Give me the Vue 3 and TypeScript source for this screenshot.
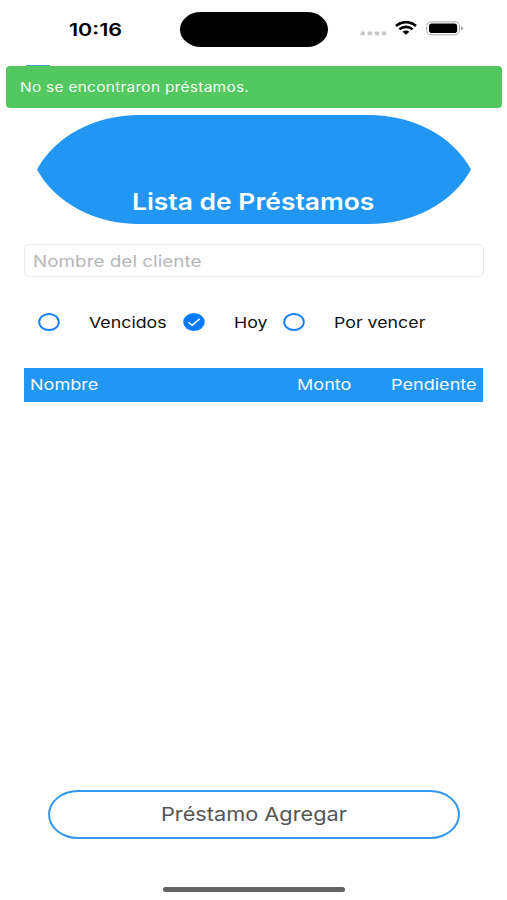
<script setup lang="ts">
import { ref } from 'vue'

interface Filter {
  id: string
  label: string
}

const filters: Filter[] = [
  { id: 'vencidos', label: 'Vencidos' },
  { id: 'hoy', label: 'Hoy' },
  { id: 'por-vencer', label: 'Por vencer' },
]
const selected = ref('hoy')
const cliente = ref('')
</script>

<template>
  <main class="screen">
    <header class="status">
      <div class="clock"><span class="wide">10:16</span></div>
      <div class="island"></div>
      <div class="indicators">
        <svg class="dots" width="27" height="5" viewBox="0 0 27 5" fill="#c8c8c8">
          <rect x="0.5" y="0.5" width="4.4" height="3.8" rx="1.3" />
          <rect x="7.6" y="0.5" width="4.4" height="3.8" rx="1.3" />
          <rect x="14.7" y="0.5" width="4.4" height="3.8" rx="1.3" />
          <rect x="21.8" y="0.5" width="4.4" height="3.8" rx="1.3" />
        </svg>
        <svg class="wifi" width="22" height="14" viewBox="0 0 22 14" fill="none" stroke="#000">
          <path d="M1 5.1C6.6 -0.1 15.4 -0.1 21 5.1" stroke-width="2.7" />
          <path d="M4.4 8.4C8.2 5 13.8 5 17.6 8.4" stroke-width="2.6" />
          <path d="M7.6 10.8Q11 8.1 14.4 10.8L11 13.8Z" fill="#000" stroke="none" />
        </svg>
        <svg class="battery" width="38" height="15" viewBox="0 0 38 15">
          <rect x="0.7" y="0.8" width="32.8" height="13" rx="4.4" fill="#fff" stroke="#aaa" />
          <rect x="3" y="2.6" width="28.2" height="9.4" rx="2.8" fill="#000" />
          <path d="M35 5.1Q37.2 5.8 37.2 7.2Q37.2 8.6 35 9.3Z" fill="#aaa" />
        </svg>
      </div>
    </header>

    <div class="toast" role="status">
      <i class="peek"></i>
      <span class="wide">No se encontraron préstamos.</span>
    </div>

    <section class="banner">
      <svg class="shape" width="434" height="109" viewBox="0 0 434 109">
        <path
          d="M0 54.5A111.5 91.4 0 0 1 102 0H332A111.5 91.4 0 0 1 434 54.5A111.5 91.4 0 0 1 332 109H102A111.5 91.4 0 0 1 0 54.5Z"
          fill="#2196f3"
        />
      </svg>
      <h1 class="wide">Lista de Préstamos</h1>
    </section>

    <label class="search">
      <input v-model="cliente" class="wide" type="text" placeholder="Nombre del cliente" />
    </label>

    <div class="filters" role="radiogroup">
      <div
        v-for="f in filters"
        :key="f.id"
        class="filter"
        :class="f.id"
        role="radio"
        :aria-checked="selected === f.id"
        @click="selected = f.id"
      >
        <svg width="22" height="18" viewBox="0 0 22 18" fill="none">
          <template v-if="selected === f.id">
            <ellipse cx="11" cy="9" rx="10.8" ry="9" fill="#047bff" />
            <path d="M5.4 9.3L9.2 12.3L16.6 5.9" stroke="#fff" stroke-width="1.4" />
          </template>
          <ellipse v-else cx="11" cy="9" rx="9.8" ry="8" stroke="#147fff" stroke-width="1.9" />
        </svg>
        <span class="wide">{{ f.label }}</span>
      </div>
    </div>

    <div class="table-head">
      <span class="nombre wide">Nombre</span>
      <span class="monto wide">Monto</span>
      <span class="pendiente wide">Pendiente</span>
    </div>

    <div class="rows"></div>

    <button class="add" type="button"><span class="wide">Préstamo Agregar</span></button>
    <div class="home-bar"></div>
  </main>
</template>

<style>
body {
  background: #fefefe;
}
</style>

<style scoped>
.screen {
  box-sizing: border-box;
  width: 507px;
  height: 900px;
  display: flex;
  flex-direction: column;
  overflow: hidden;
  background: #fefefe;
  color: #111;
  font-family: Inter, Roboto, sans-serif;
}

/* Expanded letterforms, anchored to the start of the text. */
.wide {
  display: block;
  flex: none;
  white-space: nowrap;
  transform: scaleX(1.16);
  transform-origin: 0 50%;
}

.status {
  display: grid;
  grid-template-columns: 180px 148px 1fr;
  height: 47px;
  margin-bottom: 19px;
  padding-top: 12px;
  box-sizing: border-box;
}
.clock {
  padding-left: 69px;
  font-size: 17.5px;
  line-height: 35px;
  font-weight: 600;
  color: #000;
}
.clock .wide {
  transform: scaleX(1.23);
}
.island {
  height: 35px;
  border-radius: 21px / 17.5px;
  background: #000;
}
.indicators {
  display: flex;
  align-items: flex-start;
  padding-left: 32px;
}
.dots {
  margin-top: 19px;
}
.wifi {
  margin: 9px 0 0 8px;
}
.battery {
  margin: 9px 0 0 8.5px;
}

.toast {
  position: relative;
  flex: none;
  height: 42px;
  margin: 0 5px 0 6px;
  padding-left: 14px;
  border-radius: 4px;
  background: #53c760;
  color: #f2fff2;
  font-size: 13.3px;
  line-height: 42px;
}
.toast .wide {
  letter-spacing: 0.25px;
}
.peek {
  position: absolute;
  top: -1px;
  left: 20px;
  width: 24px;
  height: 1px;
  background: #489fc0;
}

.banner {
  position: relative;
  flex: none;
  box-sizing: border-box;
  height: 109px;
  margin: 7px 36px 0 37px;
  padding: 72px 0 0 94.5px;
}
.shape {
  position: absolute;
  top: 0;
  left: 0;
}
h1 {
  margin: 0;
  color: #fff;
  font-size: 23px;
  line-height: 31px;
  font-weight: 600;
}
h1.wide {
  position: relative;
  transform: scaleX(1.148);
}

.search {
  flex: none;
  box-sizing: border-box;
  display: block;
  width: 460px;
  height: 33px;
  margin: 20px 0 0 24px;
  padding-left: 8px;
  border: 1px solid #ececec;
  border-radius: 6px / 5px;
}
.search input {
  width: 380px;
  height: 31px;
  padding: 0;
  border: 0;
  outline: 0;
  background: transparent;
  font: 16.5px Inter, Roboto, sans-serif;
  color: #111;
  transform: scaleX(1.145);
}
.search input::placeholder {
  color: #b7b7b7;
  opacity: 1;
}

.filters {
  flex: none;
  display: flex;
  height: 36px;
  margin: 27px 0 0 38px;
  font-size: 15px;
}
.filter {
  display: flex;
  align-items: center;
  gap: 29.2px;
  flex: none;
}
.filter .wide {
  transform: scaleX(1.185);
}
.vencidos {
  width: 144.5px;
}
.hoy {
  width: 100px;
}

.table-head {
  flex: none;
  display: grid;
  grid-template-columns: 267px 94px 1fr;
  width: 453px;
  height: 34px;
  margin: 28px 0 0 24px;
  padding-left: 6px;
  background: #2196f3;
  color: #f3faff;
  font-size: 15px;
  line-height: 33px;
}
.table-head .wide {
  transform: scaleX(1.205);
}

.rows {
  flex: 1;
}

.add {
  flex: none;
  box-sizing: border-box;
  width: 412px;
  height: 49px;
  margin: 0 0 48px 48px;
  padding: 0 0 0 111px;
  border: 2px solid #3399f0;
  border-radius: 30px / 24.5px;
  background: transparent;
  color: #555;
  font: 19px Inter, Roboto, sans-serif;
  text-align: left;
}
.add .wide {
  transform: scaleX(1.143);
}
.home-bar {
  flex: none;
  width: 182px;
  height: 5px;
  margin: 0 0 8px 163px;
  border-radius: 3px;
  background: #646464;
}
</style>
